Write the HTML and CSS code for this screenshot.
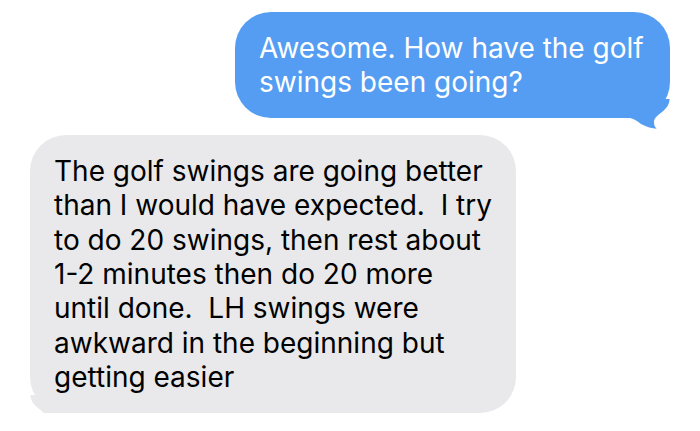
FILE: index.html
```html
<!DOCTYPE html>
<html lang="en">
<head>
<meta charset="utf-8">
<title>Messages</title>
<link rel="stylesheet" href="styles.css">
</head>
<body>
<div class="thread">
  <div class="bubble sent">
    <p class="text">Awesome. How have the golf<br>swings been going?</p>
    <svg class="tail" width="40" height="30" viewBox="0 0 40 30" aria-hidden="true">
      <path d="M0 0 L39.5 0 C39.5 5 37 9 31.7 13.2 C27 17 24 19 24 23 C24 26 25 28.5 26.7 29.8 C22 29.5 17 28 11 25 C7 22 3 19.5 0 19 Z"/>
    </svg>
  </div>
  <div class="bubble received">
    <p class="text">The golf swings are going better<br>than I would have expected.&nbsp; I try<br>to do 20 swings, then rest about<br>1-2 minutes then do 20 more<br>until done.&nbsp; LH swings were<br>awkward in the beginning but<br>getting easier</p>
    <svg class="tail" width="40" height="30" viewBox="0 0 40 30" aria-hidden="true">
      <path d="M0 0 L39.5 0 C39.5 5 37 9 31.7 13.2 C27 17 24 19 24 23 C24 26 25 28.5 26.7 29.8 C22 29.5 17 28 11 25 C7 22 3 19.5 0 19 Z"/>
    </svg>
  </div>
</div>
</body>
</html>
```
FILE: styles.css
```css
html, body {
  margin: 0;
  padding: 0;
  background: #ffffff;
}

.thread {
  display: flex;
  flex-direction: column;
  gap: 17px;
  padding: 12px 30px 0 30px;
  font-family: Inter, "Noto Sans", "Liberation Sans", sans-serif;
}

.bubble {
  position: relative;
  box-sizing: border-box;
  border-radius: 36px;
  padding: 19px 24px 18px 24px;
}

.text {
  margin: 0;
  font-size: 28px;
  line-height: 34.4px;
  white-space: nowrap;
  letter-spacing: 0;
}

.sent {
  align-self: flex-end;
  width: 435px;
  background: #549df2;
  color: #ffffff;
}

.sent .tail {
  position: absolute;
  right: 0;
  bottom: -11px;
  fill: #549df2;
}

.received {
  align-self: flex-start;
  width: 486px;
  background: #e9e9eb;
  color: #000000;
}

.received .tail {
  position: absolute;
  left: 0;
  bottom: -12px;
  fill: #e9e9eb;
  transform: scaleX(-1);
}
```
